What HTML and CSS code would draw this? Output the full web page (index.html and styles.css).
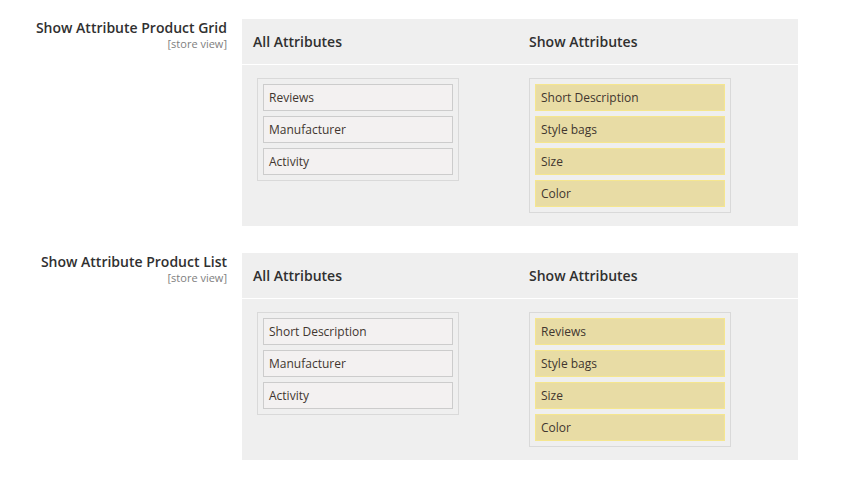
FILE: index.html
```html
<!DOCTYPE html>
<html>
<head>
<meta charset="utf-8">
<link rel="stylesheet" href="styles.css">
</head>
<body>
<div class="section">
  <div class="label">
    <div class="label-title">Show Attribute Product Grid</div>
    <div class="scope">[store view]</div>
  </div>
  <div class="panel">
    <div class="panel-head">
      <div class="head-col first">All Attributes</div>
      <div class="head-col">Show Attributes</div>
    </div>
    <div class="panel-body">
      <div class="body-col first">
        <ul class="list">
          <li class="item">Reviews</li>
          <li class="item">Manufacturer</li>
          <li class="item">Activity</li>
        </ul>
      </div>
      <div class="body-col">
        <ul class="list">
          <li class="item selected">Short Description</li>
          <li class="item selected">Style bags</li>
          <li class="item selected">Size</li>
          <li class="item selected">Color</li>
        </ul>
      </div>
    </div>
  </div>
</div>
<div class="section">
  <div class="label">
    <div class="label-title">Show Attribute Product List</div>
    <div class="scope">[store view]</div>
  </div>
  <div class="panel">
    <div class="panel-head">
      <div class="head-col first">All Attributes</div>
      <div class="head-col">Show Attributes</div>
    </div>
    <div class="panel-body">
      <div class="body-col first">
        <ul class="list">
          <li class="item">Short Description</li>
          <li class="item">Manufacturer</li>
          <li class="item">Activity</li>
        </ul>
      </div>
      <div class="body-col">
        <ul class="list">
          <li class="item selected">Reviews</li>
          <li class="item selected">Style bags</li>
          <li class="item selected">Size</li>
          <li class="item selected">Color</li>
        </ul>
      </div>
    </div>
  </div>
</div>
</body>
</html>
```

FILE: styles.css
```css
html, body {
  margin: 0;
  padding: 0;
  background: #ffffff;
}
body {
  padding-top: 19px;
  font-family: "Open Sans", "Liberation Sans", sans-serif;
  color: #303030;
}
.section {
  display: flex;
  align-items: flex-start;
  margin-bottom: 27px;
}
.label {
  width: 227px;
  padding-right: 15px;
  text-align: right;
}
.label-title {
  font-size: 14px;
  font-weight: 600;
  line-height: 18px;
  color: #303030;
}
.scope {
  font-size: 11px;
  line-height: 13px;
  color: #808080;
  margin-top: 0;
}
.panel {
  width: 556px;
  background: #efefef;
}
.panel-head {
  display: flex;
  align-items: center;
  height: 45px;
  border-bottom: 1px solid #ffffff;
}
.head-col {
  font-size: 14px;
  font-weight: 600;
  color: #303030;
}
.head-col.first {
  width: 276px;
  padding-left: 11px;
}
.panel-body {
  display: flex;
  align-items: flex-start;
  padding: 13px 0 13px 15px;
}
.body-col.first {
  width: 272px;
}
.list {
  list-style: none;
  margin: 0;
  padding: 5px;
  border: 1px solid #d9d9d9;
  display: flex;
  flex-direction: column;
  gap: 5px;
  width: 190px;
}
.item {
  box-sizing: border-box;
  height: 27px;
  line-height: 25px;
  padding-left: 5px;
  font-size: 12px;
  color: #41362f;
  background: #f3f1f1;
  border: 1px solid #cccccc;
}
.item.selected {
  background: #e8dca5;
  border-color: #f5e68f;
}
```
